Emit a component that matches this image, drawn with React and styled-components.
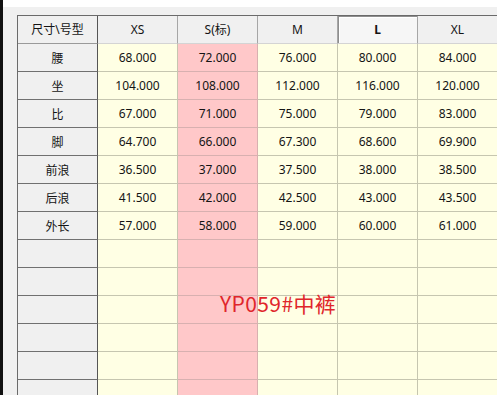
import React from "react";
import styled, { createGlobalStyle } from "styled-components";

const Global = createGlobalStyle`
  html, body { margin: 0; padding: 0; background: #ffffff; overflow: hidden; }
  body { font-family: "Noto Sans", "Noto Sans CJK SC", sans-serif; }
`;

const Screen = styled.div`
  display: flex;
  width: 497px;
  height: 395px;
  overflow: hidden;
  background: #ffffff;
`;

const EdgeStrip = styled.div`
  width: 3px;
  flex: none;
  background: #111111;
`;

const Panel = styled.div`
  flex: 1;
  margin-top: 7px;
  padding: 8px 0 0 14px;
  background: #f0f0f0;
  overflow: hidden;
`;

const TableWrap = styled.div`
  position: relative;
`;

const Grid = styled.div`
  display: grid;
  grid-template-columns: repeat(6, 80px);
  grid-auto-rows: 28px;
  border-left: 1px solid #6a6a6a;
  border-top: 1px solid #6a6a6a;
  width: max-content;
`;

const Cell = styled.div`
  box-sizing: border-box;
  display: flex;
  align-items: center;
  justify-content: center;
  font-size: 12px;
  color: #141414;
  white-space: nowrap;
  font-family: "Noto Sans", "Noto Sans CJK SC", sans-serif;
`;

const HeaderCell = styled(Cell)`
  background: ${(p) => (p.$selected ? "#f6f6f6" : "#f0f0f0")};
  border-right: 1px solid ${(p) => (p.$corner ? "#555555" : "#a6a6a6")};
  border-bottom: 1px solid ${(p) => (p.$corner ? "#9a9a9a" : "#d4d4d4")};
  font-weight: ${(p) => (p.$selected ? 700 : 400)};
  box-shadow: ${(p) =>
    p.$selected ? "inset 1px 1px 0 #8e8e8e, inset 2px 2px 0 #ffffff" : "none"};
  padding-bottom: 1px;
`;

const RowHead = styled(Cell)`
  background: #f0f0f0;
  border-right: 1px solid #555555;
  border-bottom: 1px solid #707070;
`;

const DataCell = styled(Cell)`
  background: ${(p) => (p.$pink ? "#ffc8c9" : "#ffffe4")};
  border-right: 1px solid ${(p) => (p.$pink ? "#d8b0b0" : "#c6c6b0")};
  border-bottom: 1px solid ${(p) => (p.$pink ? "#d8b0b0" : "#c6c6b0")};
`;

const Stamp = styled.div`
  position: absolute;
  left: 203px;
  top: 278px;
  font-family: "Noto Sans CJK SC", "Noto Sans", sans-serif;
  font-size: 21px;
  letter-spacing: 0.4px;
  line-height: 1;
  color: #e0262b;
  white-space: nowrap;
  pointer-events: none;
`;

const sizes = ["XS", "S(标)", "M", "L", "XL"];
const rows = [
  ["腰", "68.000", "72.000", "76.000", "80.000", "84.000"],
  ["坐", "104.000", "108.000", "112.000", "116.000", "120.000"],
  ["比", "67.000", "71.000", "75.000", "79.000", "83.000"],
  ["脚", "64.700", "66.000", "67.300", "68.600", "69.900"],
  ["前浪", "36.500", "37.000", "37.500", "38.000", "38.500"],
  ["后浪", "41.500", "42.000", "42.500", "43.000", "43.500"],
  ["外长", "57.000", "58.000", "59.000", "60.000", "61.000"],
];
const emptyRows = 6;

export default function App() {
  const allRows = [
    ...rows,
    ...Array.from({ length: emptyRows }, () => ["", "", "", "", "", ""]),
  ];
  return (
    <>
      <Global />
      <Screen>
        <EdgeStrip />
        <Panel>
          <TableWrap>
            <Grid>
              <HeaderCell $corner>尺寸\号型</HeaderCell>
              {sizes.map((s) => (
                <HeaderCell key={s} $selected={s === "L"}>
                  {s}
                </HeaderCell>
              ))}
              {allRows.map((r, i) => (
                <React.Fragment key={i}>
                  <RowHead>{r[0]}</RowHead>
                  {r.slice(1).map((v, j) => (
                    <DataCell key={j} $pink={j === 1}>
                      {v}
                    </DataCell>
                  ))}
                </React.Fragment>
              ))}
            </Grid>
            <Stamp>YP059#中裤</Stamp>
          </TableWrap>
        </Panel>
      </Screen>
    </>
  );
}
